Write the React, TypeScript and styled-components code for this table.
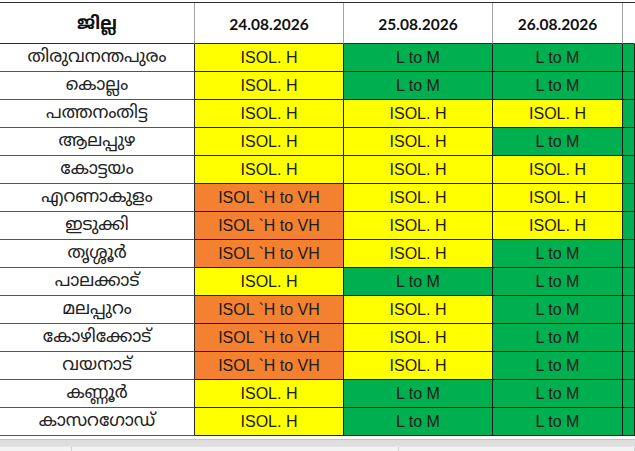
import React from "react";
import styled, { createGlobalStyle } from "styled-components";

type Level = "H" | "VH" | "LM";

const GlobalStyle = createGlobalStyle`
  html, body {
    margin: 0;
    padding: 0;
    background: #ffffff;
  }
  body {
    font-family: "Liberation Sans", Arial, sans-serif;
    overflow: hidden;
  }
`;

const Page = styled.div`
  width: 635px;
  height: 451px;
  display: flex;
  flex-direction: column;
  padding-top: 2px;
  box-sizing: border-box;
  overflow: hidden;
  background: #ffffff;
`;

const Sheet = styled.div`
  display: grid;
  grid-template-columns: 195px 149px 149px 130px 1fr;
  grid-auto-rows: 28px;
  grid-template-rows: 41px;
  border-top: 1px solid #2b2b2b;
`;

const HeadCell = styled.div<{ $last?: boolean }>`
  display: flex;
  align-items: center;
  justify-content: center;
  box-sizing: border-box;
  border-right: 1px solid ${(p) => (p.$last ? "transparent" : "#a3a3a3")};
  border-bottom: 1px solid #2b2b2b;
  font-family: Lato, "Noto Sans", sans-serif;
  font-weight: 700;
  font-size: 15.5px;
  color: #111111;
  padding-top: 2px;
`;

const DistrictHead = styled(HeadCell)`
  font-family: "Noto Sans Malayalam", "Noto Sans", "Manjari", "Meera", sans-serif;
  font-size: 18px;
`;

const District = styled.div`
  display: flex;
  align-items: center;
  justify-content: center;
  box-sizing: border-box;
  border-right: 1px solid #2b2b2b;
  border-bottom: 1px solid #555555;
  font-family: "Noto Sans Malayalam", "Noto Sans", "Manjari", "Meera", sans-serif;
  font-size: 17.5px;
  font-weight: 400;
  color: #222222;
  white-space: nowrap;
`;

const fills: Record<Level, string> = {
  H: "#ffff00",
  VH: "#f4812f",
  LM: "#00b050",
};

const labels: Record<Level, string> = {
  H: "ISOL. H",
  VH: "ISOL `H to VH",
  LM: "L to M",
};

const Cell = styled.div<{ $level: Level }>`
  display: flex;
  align-items: center;
  justify-content: center;
  box-sizing: border-box;
  background: ${(p) => fills[p.$level]};
  border-right: 1px solid #1c1c1c;
  border-bottom: 1px solid #1c1c1c;
  font-family: "Liberation Sans", Arial, sans-serif;
  font-size: 16px;
  color: #1a1a1a;
  white-space: nowrap;
  overflow: hidden;
  padding-top: 1px;
`;

const Footer = styled.div`
  margin-top: 3px;
  flex: 1;
  display: flex;
  flex-direction: column;
`;

const ScrollTrack = styled.div`
  height: 6px;
  border-top: 1px solid #c4c4c4;
  background: #dedede;
`;

const TabStrip = styled.div`
  flex: 1;
  display: flex;
  background: #f3f3f3;
  border-top: 1px solid #e6e6e6;
`;

const Tab = styled.div<{ $w?: number }>`
  width: ${(p) => (p.$w ? `${p.$w}px` : "auto")};
  flex: ${(p) => (p.$w ? "none" : "1")};
  border-right: 1px solid #d2d2d2;
`;

const dates = ["24.08.2026", "25.08.2026", "26.08.2026"];

const rows: [string, Level, Level, Level][] = [
  ["തിരുവനന്തപുരം", "H", "LM", "LM"],
  ["കൊല്ലം", "H", "LM", "LM"],
  ["പത്തനംതിട്ട", "H", "H", "H"],
  ["ആലപ്പുഴ", "H", "H", "LM"],
  ["കോട്ടയം", "H", "H", "H"],
  ["എറണാകുളം", "VH", "H", "H"],
  ["ഇടുക്കി", "VH", "H", "H"],
  ["തൃശ്ശൂർ", "VH", "H", "LM"],
  ["പാലക്കാട്", "H", "LM", "LM"],
  ["മലപ്പുറം", "VH", "H", "LM"],
  ["കോഴിക്കോട്", "VH", "H", "LM"],
  ["വയനാട്", "VH", "H", "LM"],
  ["കണ്ണൂർ", "H", "LM", "LM"],
  ["കാസറഗോഡ്", "H", "LM", "LM"],
];

export default function App() {
  return (
    <>
      <GlobalStyle />
      <Page>
        <Sheet>
          <DistrictHead>ജില്ല</DistrictHead>
          {dates.map((d) => (
            <HeadCell key={d}>{d}</HeadCell>
          ))}
          <HeadCell $last />
          {rows.map(([name, a, b, c]) => (
            <React.Fragment key={name}>
              <District>{name}</District>
              <Cell $level={a}>{labels[a]}</Cell>
              <Cell $level={b}>{labels[b]}</Cell>
              <Cell $level={c}>{labels[c]}</Cell>
              <Cell $level="LM" />
            </React.Fragment>
          ))}
        </Sheet>
        <Footer>
          <ScrollTrack />
          <TabStrip>
            <Tab $w={71} />
            <Tab $w={326} />
            <Tab />
          </TabStrip>
        </Footer>
      </Page>
    </>
  );
}
